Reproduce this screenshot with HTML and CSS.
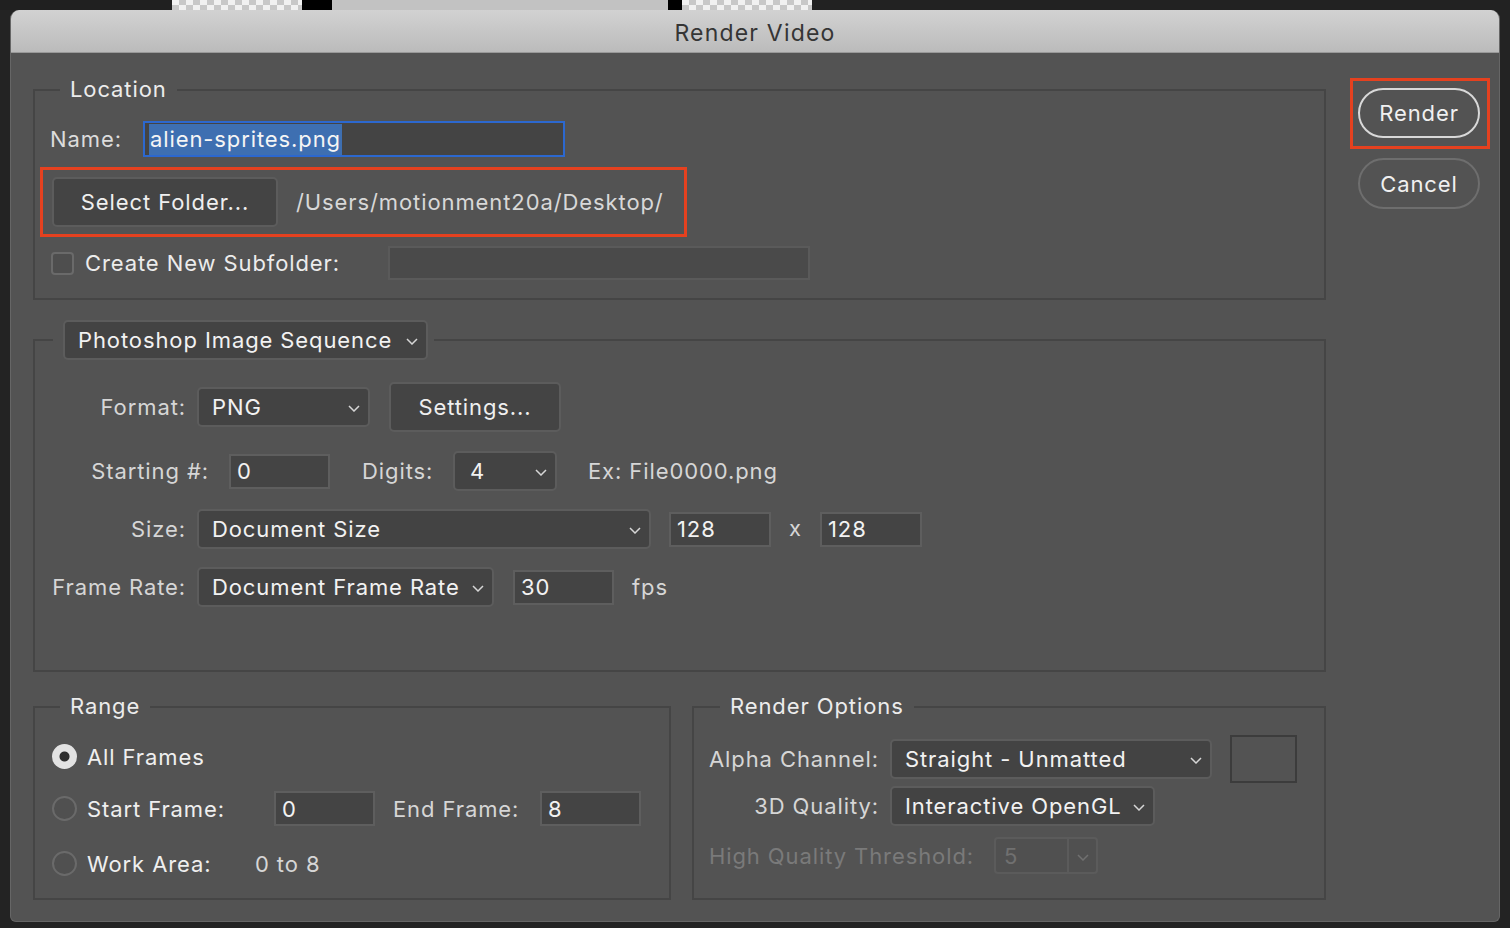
FILE: index.html
```html
<!DOCTYPE html>
<html>
<head>
<meta charset="utf-8">
<title>Render Video</title>
<link rel="stylesheet" href="styles.css">
</head>
<body>
<div class="topstrip">
  <div class="ts-dark"></div>
  <div class="ts-check"></div>
  <div class="ts-black"></div>
  <div class="ts-gray"></div>
  <div class="ts-black2"></div>
  <div class="ts-check"></div>
  <div class="ts-rest"></div>
</div>
<div class="dialog">
  <div class="titlebar">Render Video</div>
  <div class="dlg-body">
    <div class="main">
      <fieldset class="fs fs-location">
        <legend class="lg">Location</legend>
        <div class="loc-inner">
          <div class="row name-row">
            <span class="lbl-name">Name:</span>
            <div class="inp name-inp"><span class="sel">alien-sprites.png</span></div>
          </div>
          <div class="redbox folder-row">
            <div class="btn folder-btn">Select Folder...</div>
            <span class="path">/Users/motionment20a/Desktop/</span>
          </div>
          <div class="row sub-row">
            <span class="checkbox"></span>
            <span class="lbl-sub">Create New Subfolder:</span>
            <div class="inp sub-inp"></div>
          </div>
        </div>
      </fieldset>

      <fieldset class="fs fs-seq">
        <legend class="lg-dd">
          <div class="dd dd-seq"><span>Photoshop Image Sequence</span><svg class="chev" viewBox="0 0 12 7"><polyline points="1,1 6,6 11,1"/></svg></div>
        </legend>
        <div class="seq-inner">
          <div class="row r-format">
            <span class="lbl">Format:</span>
            <div class="dd dd-png"><span>PNG</span><svg class="chev" viewBox="0 0 12 7"><polyline points="1,1 6,6 11,1"/></svg></div>
            <div class="btn settings-btn">Settings...</div>
          </div>
          <div class="row r-start">
            <span class="lbl lbl-start">Starting #:</span>
            <div class="inp inp-num">0</div>
            <span class="lbl-digits">Digits:</span>
            <div class="dd dd-digits"><span>4</span><svg class="chev" viewBox="0 0 12 7"><polyline points="1,1 6,6 11,1"/></svg></div>
            <span class="ex">Ex: File0000.png</span>
          </div>
          <div class="row r-size">
            <span class="lbl">Size:</span>
            <div class="dd dd-size"><span>Document Size</span><svg class="chev" viewBox="0 0 12 7"><polyline points="1,1 6,6 11,1"/></svg></div>
            <div class="inp inp-w">128</div>
            <span class="times">x</span>
            <div class="inp inp-h">128</div>
          </div>
          <div class="row r-rate">
            <span class="lbl">Frame Rate:</span>
            <div class="dd dd-rate"><span>Document Frame Rate</span><svg class="chev" viewBox="0 0 12 7"><polyline points="1,1 6,6 11,1"/></svg></div>
            <div class="inp inp-fps">30</div>
            <span class="fps">fps</span>
          </div>
        </div>
      </fieldset>

      <div class="bottom-grid">
        <fieldset class="fs fs-range">
          <legend class="lg">Range</legend>
          <div class="range-inner">
            <div class="row rr1">
              <span class="radio on"></span>
              <span class="rlbl">All Frames</span>
            </div>
            <div class="row rr2">
              <span class="radio"></span>
              <span class="rlbl rlbl-start">Start Frame:</span>
              <div class="inp inp-frame">0</div>
              <span class="lbl-end">End Frame:</span>
              <div class="inp inp-frame">8</div>
            </div>
            <div class="row rr3">
              <span class="radio"></span>
              <span class="rlbl rlbl-work">Work Area:</span>
              <span class="work-val">0 to 8</span>
            </div>
          </div>
        </fieldset>

        <fieldset class="fs fs-opts">
          <legend class="lg lg-opts">Render Options</legend>
          <div class="opts-inner">
            <div class="row ro1">
              <span class="olbl">Alpha Channel:</span>
              <div class="dd dd-alpha"><span>Straight - Unmatted</span><svg class="chev" viewBox="0 0 12 7"><polyline points="1,1 6,6 11,1"/></svg></div>
              <div class="swatch"></div>
            </div>
            <div class="row ro2">
              <span class="olbl">3D Quality:</span>
              <div class="dd dd-3d"><span>Interactive OpenGL</span><svg class="chev" viewBox="0 0 12 7"><polyline points="1,1 6,6 11,1"/></svg></div>
            </div>
            <div class="row ro3">
              <span class="olbl-dis">High Quality Threshold:</span>
              <div class="combo-dis">
                <span class="combo-val">5</span>
                <span class="combo-arrow"><svg class="chev chev-dis" viewBox="0 0 12 7"><polyline points="1,1 6,6 11,1"/></svg></span>
              </div>
            </div>
          </div>
        </fieldset>
      </div>
    </div>

    <div class="side">
      <div class="redbox render-box">
        <div class="pill pill-render">Render</div>
      </div>
      <div class="pill pill-cancel">Cancel</div>
    </div>
  </div>
</div>
</body>
</html>
```

FILE: styles.css
```css
* { box-sizing: border-box; }
html, body { margin: 0; padding: 0; }
body {
  background: #232323;
  width: 1510px;
  height: 928px;
  overflow: hidden;
  font-family: Inter, "Noto Sans", sans-serif;
  font-size: 22px;
  letter-spacing: 0.9px;
  color: #e4e4e4;
}

/* top strip behind the dialog */
.topstrip { height: 10px; display: flex; }
.ts-dark { width: 172px; background: #202020; }
.ts-check {
  width: 130px;
  background: repeating-conic-gradient(#c8c8c8 0 25%, #f1f1f1 0 50%) 0 -2px / 14px 14px;
}
.ts-black { width: 30px; background: #000; }
.ts-gray { width: 336px; background: #c2c2c2; }
.ts-black2 { width: 14px; background: #000; }
.ts-rest { flex: 1; background: #222; }

/* dialog window */
.dialog {
  margin: 0 10px;
  height: 912px;
  background: #535353;
  border-radius: 9px 9px 6px 6px;
  border: 1px solid #666;
  border-top: none;
  overflow: hidden;
  display: flex;
  flex-direction: column;
}
.titlebar {
  height: 43px;
  flex: none;
  background: linear-gradient(#d2d2d2, #bbbbbb);
  border-bottom: 1px solid #999;
  display: flex;
  align-items: center;
  justify-content: center;
  color: #353535;
  font-size: 23px;
  letter-spacing: 1.2px;
  padding-top: 3px;
}
.dlg-body {
  display: grid;
  grid-template-columns: 1293px 140px;
  column-gap: 24px;
  padding: 22px 0 0 22px;
}
.main { display: flex; flex-direction: column; }

/* fieldsets */
.fs {
  margin: 0;
  padding: 0;
  border: 2px solid #454545;
  min-width: 0;
}
.lg {
  margin-left: 25px;
  padding: 0 10px;
  height: 30px;
  line-height: 28px;
  color: #ececec;
}
.lg-opts { margin-left: 26px; }
.lg-dd { margin-left: 18px; padding: 0 6px 0 10px; height: 40px; }

.row { display: flex; align-items: center; }

/* generic controls */
.inp {
  background: #444;
  border: 2px solid #5e5e5e;
  height: 35px;
  display: flex;
  align-items: center;
  padding-left: 6px;
  color: #f2f2f2;
}
.dd {
  background: #434343;
  border: 2px solid #5c5c5c;
  border-radius: 5px;
  height: 40px;
  display: flex;
  align-items: center;
  justify-content: space-between;
  padding: 0 8px 0 13px;
  color: #f2f2f2;
}
.chev {
  width: 12px;
  height: 7px;
  margin-top: 3px;
  fill: none;
  stroke: #d6d6d6;
  stroke-width: 1.5;
  flex: none;
}
.btn {
  background: #444;
  border: 2px solid #5c5c5c;
  border-radius: 5px;
  display: flex;
  align-items: center;
  justify-content: center;
  color: #efefef;
}
.redbox { border: 3px solid #e5411f; }

/* location */
.loc-inner { padding: 16px 15px 18px 15px; }
.name-row { height: 36px; }
.lbl-name { width: 93px; color: #dcdcdc; }
.name-inp {
  width: 422px;
  height: 36px;
  border-color: #2c68cf;
  padding-left: 4px;
  background: #444;
}
.sel { background: #3e6fb1; color: #f5f5f5; padding: 1px 1px 2px 1px; line-height: 28px; }
.folder-row {
  margin-top: 10px;
  margin-left: -10px;
  width: 647px;
  padding: 7px 9px;
  display: flex;
  align-items: center;
}
.folder-btn { width: 226px; height: 50px; }
.path { margin-left: 18px; color: #d8d8d8; }
.sub-row { margin-top: 9px; height: 34px; }
.checkbox {
  width: 23px;
  height: 23px;
  margin-left: 1px;
  border: 2px solid #6a6a6a;
  border-radius: 4px;
  background: #4e4e4e;
  flex: none;
}
.lbl-sub { margin-left: 11px; width: 303px; color: #ececec; }
.sub-inp { width: 422px; height: 34px; background: #4a4a4a; border-color: #5a5a5a; }

/* sequence */
.fs-seq { margin-top: 20px; }
.dd-seq { width: 365px; }
.seq-inner { padding: 22px 15px 63px 15px; }
.lbl { width: 136px; text-align: right; margin-right: 11px; color: #d6d6d6; }
.r-format { height: 50px; }
.dd-png { width: 173px; }
.settings-btn { margin-left: 19px; width: 172px; height: 50px; }
.r-start { margin-top: 19px; height: 40px; }
.lbl-start { width: 159px; margin-right: 20px; }
.inp-num { width: 101px; }
.lbl-digits { margin-left: 32px; width: 91px; color: #d6d6d6; }
.dd-digits { width: 104px; padding-left: 15px; }
.ex { margin-left: 31px; color: #d6d6d6; }
.r-size { margin-top: 18px; height: 40px; }
.dd-size { width: 454px; }
.inp-w { margin-left: 18px; width: 102px; }
.times { width: 49px; text-align: center; color: #d6d6d6; padding-bottom: 3px; }
.inp-h { width: 102px; }
.r-rate { margin-top: 18px; height: 40px; }
.dd-rate { width: 297px; }
.inp-fps { margin-left: 19px; width: 101px; }
.fps { margin-left: 18px; color: #d6d6d6; }

/* bottom */
.bottom-grid {
  margin-top: 20px;
  display: grid;
  grid-template-columns: 638px 634px;
  column-gap: 21px;
}
.range-inner { padding: 17px 15px 17px 17px; }
.radio {
  width: 25px;
  height: 25px;
  border-radius: 50%;
  border: 2px solid #6a6a6a;
  background: #505050;
  flex: none;
}
.radio.on {
  border: none;
  background: radial-gradient(circle, #2e2e2e 0 4.5px, #e2e2e2 5.5px);
}
.rlbl { margin-left: 10px; color: #efefef; }
.rr1 { height: 35px; }
.rr2 { margin-top: 17px; height: 35px; }
.rlbl-start { width: 187px; }
.inp-frame { width: 101px; }
.lbl-end { margin-left: 18px; width: 147px; color: #d6d6d6; }
.rr3 { margin-top: 20px; height: 35px; }
.rlbl-work { width: 168px; }
.work-val { color: #d6d6d6; }

.opts-inner { padding: 13px 15px 0 15px; }
.olbl { width: 170px; text-align: right; margin-right: 11px; color: #d6d6d6; white-space: nowrap; }
.ro1 { height: 48px; }
.dd-alpha { width: 322px; }
.swatch { margin-left: 18px; width: 67px; height: 48px; border: 2px solid #3c3c3c; }
.ro2 { margin-top: 3px; height: 40px; }
.dd-3d { width: 265px; }
.ro3 { margin-top: 11px; height: 37px; }
.olbl-dis { width: 285px; color: #7a7a7a; white-space: nowrap; }
.combo-dis {
  width: 104px;
  height: 37px;
  border: 2px solid #5b5b5b;
  border-radius: 4px;
  display: flex;
  background: #505050;
}
.combo-val {
  width: 73px;
  border-right: 2px solid #5b5b5b;
  color: #707070;
  padding-left: 8px;
  display: flex;
  align-items: center;
}
.combo-arrow { flex: 1; display: flex; align-items: center; justify-content: center; }
.chev-dis { stroke: #707070; }

/* side buttons */
.side { display: flex; flex-direction: column; }
.render-box { margin-top: 3px; width: 140px; padding: 7px 7px 8px 5px; }
.pill {
  width: 122px;
  border-radius: 26px;
  display: flex;
  align-items: center;
  justify-content: center;
  color: #f0f0f0;
}
.pill-render { height: 50px; border: 2px solid #d8d8d8; }
.pill-cancel { margin-top: 9px; margin-left: 8px; height: 51px; border: 2px solid #6e6e6e; }
```
